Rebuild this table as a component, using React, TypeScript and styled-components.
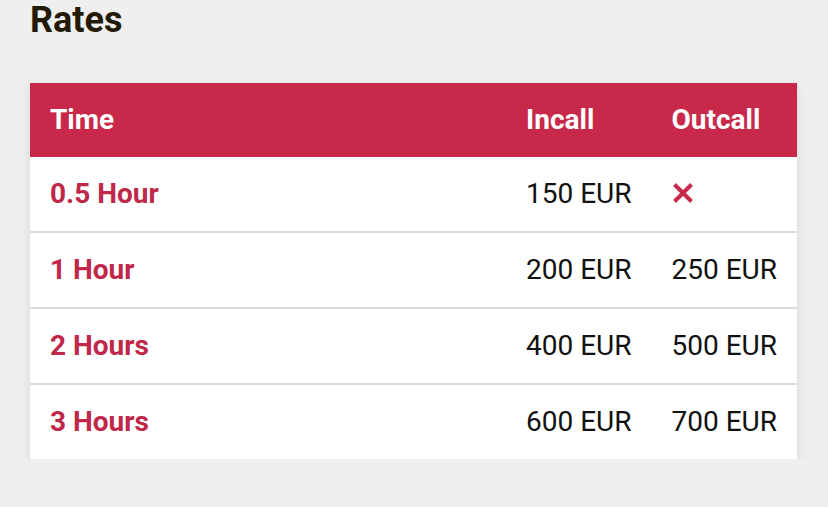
import React from 'react';
import styled, { createGlobalStyle } from 'styled-components';

const GlobalStyle = createGlobalStyle`
  html, body {
    margin: 0;
    padding: 0;
    background: #efefef;
    font-family: Roboto, "Liberation Sans", sans-serif;
  }
`;

const rates = [
  { time: '0.5 Hour', incall: '150 EUR', outcall: null },
  { time: '1 Hour', incall: '200 EUR', outcall: '250 EUR' },
  { time: '2 Hours', incall: '400 EUR', outcall: '500 EUR' },
  { time: '3 Hours', incall: '600 EUR', outcall: '700 EUR' },
];

const Cross = () => (
  <svg width="22" height="22" viewBox="0 0 22 22">
    <path d="M2.5 2.5 L19.5 19.5 M19.5 2.5 L2.5 19.5" stroke="#c8294a" strokeWidth="4" />
  </svg>
);

const App = () => {
  return (
    <>
      <GlobalStyle />
      <Page>
        <Title>Rates</Title>
        <Card>
          <Table>
            <thead>
              <tr>
                <HeadCell wide>Time</HeadCell>
                <HeadCell>Incall</HeadCell>
                <HeadCell>Outcall</HeadCell>
              </tr>
            </thead>
            <tbody>
              {rates.map((r) => (
                <Row key={r.time}>
                  <TimeCell>{r.time}</TimeCell>
                  <PriceCell>{r.incall}</PriceCell>
                  <PriceCell>{r.outcall ?? <Cross />}</PriceCell>
                </Row>
              ))}
            </tbody>
          </Table>
        </Card>
      </Page>
    </>
  );
};

export default App;

const Page = styled.div`
  width: 767px;
  padding: 0 31px 0 30px;
`;

const Title = styled.h2`
  margin: 0;
  height: 83px;
  font-size: 36px;
  line-height: 41px;
  font-weight: 700;
  color: #231a06;
`;

const Card = styled.div`
  background: #fff;
  box-shadow: 0 4px 10px rgba(0, 0, 0, 0.1);
`;

const Table = styled.table`
  width: 100%;
  border-collapse: collapse;
`;

const HeadCell = styled.th<{ wide?: boolean }>`
  height: 72px;
  padding: 0 20px 2px;
  width: ${({ wide }) => (wide ? '100%' : 'auto')};
  background: #c8294a;
  color: #fff;
  font-size: 28px;
  font-weight: 700;
  text-align: left;
  white-space: nowrap;
`;

const Row = styled.tr`
  border-top: 2px solid #dcdcdc;
  &:first-child {
    border-top: none;
  }
`;

const TimeCell = styled.td`
  height: 72px;
  padding: 0 20px 2px;
  color: #c0284a;
  font-size: 28px;
  font-weight: 700;
  white-space: nowrap;
`;

const PriceCell = styled.td`
  height: 72px;
  padding: 0 20px 2px;
  color: #111;
  font-size: 28px;
  white-space: nowrap;
  svg {
    display: block;
  }
`;
